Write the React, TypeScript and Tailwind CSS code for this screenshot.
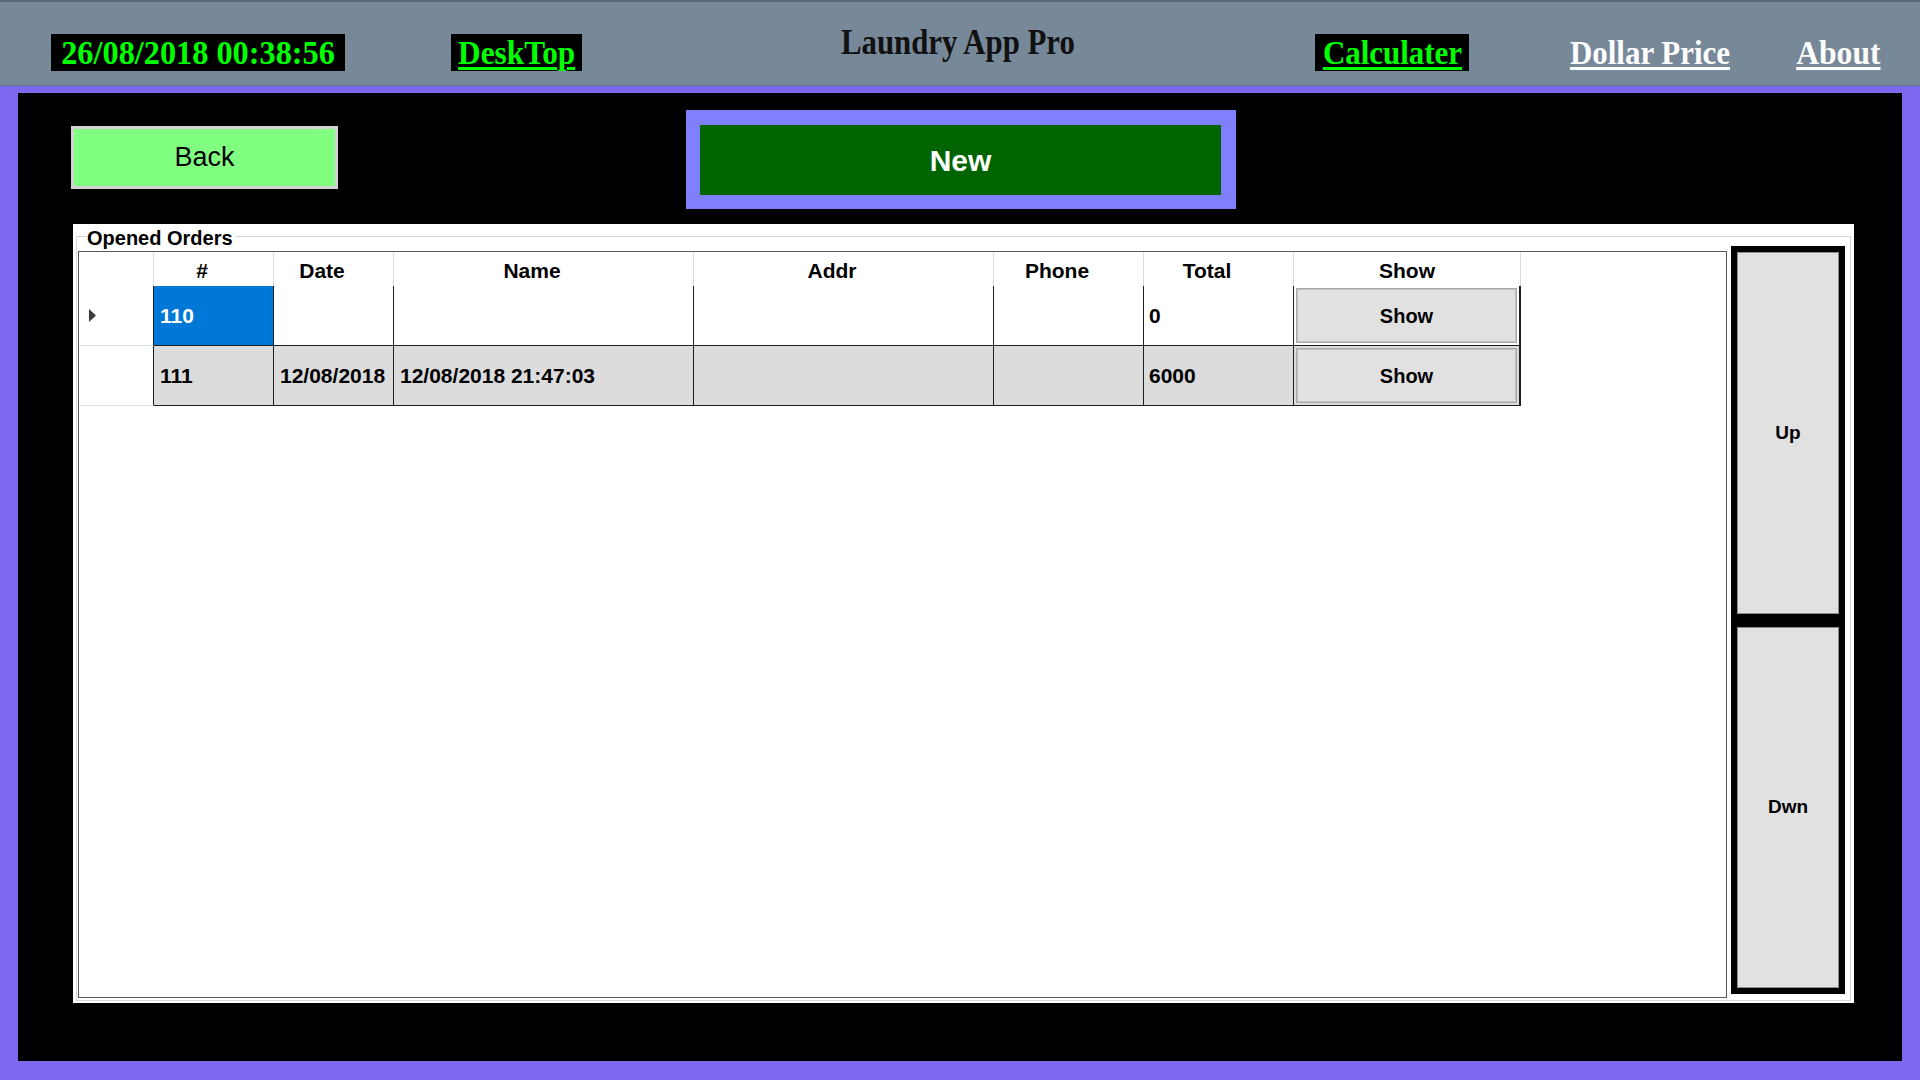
import React from "react";

type Order = {
  id: string;
  date: string;
  name: string;
  addr: string;
  phone: string;
  total: string;
  selected?: boolean;
  alt?: boolean;
};

const orders: Order[] = [
  { id: "110", date: "", name: "", addr: "", phone: "", total: "0", selected: true },
  { id: "111", date: "12/08/2018", name: "12/08/2018 21:47:03", addr: "", phone: "", total: "6000", alt: true },
];

// sortable columns keep room for the sort glyph on the right; the button column does not
const headers = [
  { label: "#", sortable: true },
  { label: "Date", sortable: true },
  { label: "Name", sortable: true },
  { label: "Addr", sortable: true },
  { label: "Phone", sortable: true },
  { label: "Total", sortable: true },
  { label: "Show", sortable: false },
];

const rowCols = "grid grid-cols-[75px_120px_120px_300px_300px_150px_150px_227px]";

function Header() {
  return (
    <div className="h-[86px] shrink-0 bg-[#778899] border-t-2 border-t-[#5c6773] border-b border-b-[#6a7786] flex items-start font-['Liberation_Serif','Times_New_Roman',serif] font-bold">
      <div className="ml-[51px] mt-[32px] w-[294px] h-[37px] bg-black flex items-center justify-center">
        <span className="inline-block whitespace-nowrap text-[34px] leading-[37px] text-[#00ff00] scale-x-[0.95]">
          26/08/2018 00:38:56
        </span>
      </div>
      <div className="ml-[106px] mt-[32px] w-[131px] h-[37px] bg-black flex items-center justify-center">
        <span className="inline-block whitespace-nowrap text-[34px] leading-[37px] text-[#00ff00] underline decoration-[3px] underline-offset-[3px] scale-x-[0.92]">
          DeskTop
        </span>
      </div>
      <div className="ml-[176px] mt-[21px] w-[400px] h-[40px] flex items-center justify-center">
        <span className="inline-block whitespace-nowrap text-[35px] leading-[40px] text-[#111111] scale-x-[0.88]">
          Laundry App Pro
        </span>
      </div>
      <div className="ml-[157px] mt-[32px] w-[154px] h-[37px] bg-black flex items-center justify-center">
        <span className="inline-block whitespace-nowrap text-[34px] leading-[37px] text-[#00ff00] underline decoration-[3px] underline-offset-[3px] scale-x-[0.91]">
          Calculater
        </span>
      </div>
      <div className="ml-[101px] mt-[32px] w-[159px] h-[37px] flex items-center justify-center">
        <span className="inline-block whitespace-nowrap text-[34px] leading-[37px] text-white underline decoration-[3px] underline-offset-[3px] scale-x-[0.91]">
          Dollar Price
        </span>
      </div>
      <div className="ml-[67px] mt-[32px] w-[84px] h-[37px] flex items-center justify-center">
        <span className="inline-block whitespace-nowrap text-[34px] leading-[37px] text-white underline decoration-[3px] underline-offset-[3px] scale-x-[0.93]">
          About
        </span>
      </div>
    </div>
  );
}

function RowMarker() {
  return (
    <svg width="8" height="13" viewBox="0 0 8 13" className="ml-[10px]">
      <path d="M0 0 L7 6.5 L0 13 Z" fill="#3c3c3c" />
    </svg>
  );
}

function DataGrid() {
  return (
    <div className="mt-[14px] w-[1649px] h-[747px] border border-[#5a5a5a] bg-white text-[21px] font-bold text-black">
      {/* column headers */}
      <div className={`${rowCols} h-[34px]`}>
        <div className="border-r border-b border-[#dcdcdc]" />
        {headers.map((h) => (
          <div
            key={h.label}
            className={`border-r border-b border-[#dcdcdc] flex items-center justify-center pt-[3px] ${h.sortable ? "pr-[23px]" : "pr-0"}`}
          >
            {h.label}
          </div>
        ))}
      </div>
      {/* rows */}
      {orders.map((o) => {
        const cellBg = o.alt ? "bg-[#dcdcdc]" : "bg-white";
        return (
          <div key={o.id} className={`${rowCols} h-[60px]`}>
            <div className="bg-white border-r border-r-[#1e1e1e] border-b border-b-[#e0e0e0] flex items-center">
              {o.selected ? <RowMarker /> : null}
            </div>
            <div
              className={`${o.selected ? "bg-[#0078d7] text-white" : cellBg} border-r border-b border-[#1e1e1e] flex items-center pl-[6px]`}
            >
              {o.id}
            </div>
            <div className={`${cellBg} border-r border-b border-[#1e1e1e] flex items-center pl-[6px]`}>{o.date}</div>
            <div className={`${cellBg} border-r border-b border-[#1e1e1e] flex items-center pl-[6px]`}>{o.name}</div>
            <div className={`${cellBg} border-r border-b border-[#1e1e1e] flex items-center pl-[6px]`}>{o.addr}</div>
            <div className={`${cellBg} border-r border-b border-[#1e1e1e] flex items-center pl-[6px]`}>{o.phone}</div>
            <div className={`${cellBg} border-r border-b border-[#1e1e1e] flex items-center pl-[5px]`}>{o.total}</div>
            <div className={`${cellBg} border-r-2 border-b border-[#1e1e1e] pl-[2px] pr-[2px] py-[2px]`}>
              <button className="w-full h-full bg-[#e1e1e1] border-2 border-[#c4c4c4] outline outline-1 outline-[#a8a8a8] -outline-offset-1 font-bold text-[20px] text-black">
                Show
              </button>
            </div>
          </div>
        );
      })}
    </div>
  );
}

function ScrollButtons() {
  return (
    <div className="ml-[4px] mt-[9px] w-[114px] h-[748px] bg-black p-[6px] flex flex-col gap-[13px]">
      <button className="flex-1 bg-[#e1e1e1] border border-[#8c8c8c] font-bold text-[19px] text-black">Up</button>
      <button className="flex-1 bg-[#e1e1e1] border border-[#8c8c8c] font-bold text-[19px] text-black">Dwn</button>
    </div>
  );
}

function OpenedOrders() {
  return (
    <div className="relative ml-[2px] mt-[15px] w-[1781px] h-[779px] bg-white pt-[12px] px-[3px] pb-[2px]">
      <div className="h-full border border-[#d8d8d8] flex items-start pl-[1px]">
        <DataGrid />
        <ScrollButtons />
      </div>
      <span className="absolute left-[14px] top-[3px] bg-white pr-[2px] text-[20px] leading-[22px] font-bold text-black">
        Opened Orders
      </span>
    </div>
  );
}

export default function App() {
  return (
    <div className="w-[1920px] h-[1080px] flex flex-col overflow-hidden font-['Liberation_Sans',Arial,sans-serif]">
      <Header />
      <div className="flex-1 flex bg-[#7b68ee] pt-[7px] px-[18px] pb-[19px]">
        <div className="flex-1 bg-black pl-[53px] flex flex-col">
          <div className="flex items-start">
            <button className="mt-[33px] w-[267px] h-[63px] bg-[#80ff80] border-[3px] border-[#d2d2d2] text-black text-[27px] leading-none flex items-center justify-center">
              Back
            </button>
            <div className="ml-[348px] mt-[17px] w-[550px] h-[99px] bg-[#8080ff] pl-[14px] pr-[15px] pt-[15px] pb-[14px]">
              <button className="w-full h-full bg-[#006400] text-white font-bold text-[30px]">New</button>
            </div>
          </div>
          <OpenedOrders />
        </div>
      </div>
    </div>
  );
}
